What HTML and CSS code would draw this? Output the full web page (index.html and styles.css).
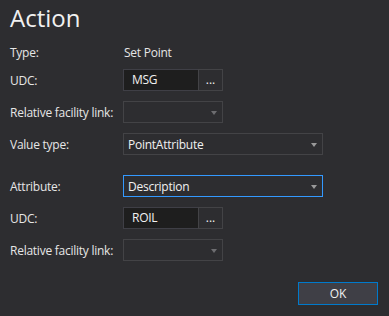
FILE: index.html
```html
<!DOCTYPE html>
<html lang="en">
<head>
  <meta charset="UTF-8">
  <title>Action</title>
  <link rel="stylesheet" href="styles.css">
</head>
<body>
  <div class="dialog">
    <h1 class="title">Action</h1>

    <div class="form">
      <div class="row row-type">
        <span class="label">Type:</span>
        <span class="value">Set Point</span>
      </div>

      <!-- first point -->
      <div class="row">
        <span class="label">UDC:</span>
        <div class="picker">
          <div class="textbox">MSG</div>
          <button class="browse">...</button>
        </div>
      </div>
      <div class="row">
        <span class="label">Relative facility link:</span>
        <div class="combo combo-short disabled"><span class="arrow"></span></div>
      </div>
      <div class="row">
        <span class="label">Value type:</span>
        <div class="combo combo-wide"><span>PointAttribute</span><span class="arrow"></span></div>
      </div>

      <!-- attribute -->
      <div class="row row-gap">
        <span class="label">Attribute:</span>
        <div class="combo combo-wide focused"><span>Description</span><span class="arrow"></span></div>
      </div>
      <div class="row">
        <span class="label">UDC:</span>
        <div class="picker">
          <div class="textbox">ROIL</div>
          <button class="browse">...</button>
        </div>
      </div>
      <div class="row">
        <span class="label">Relative facility link:</span>
        <div class="combo combo-short disabled"><span class="arrow"></span></div>
      </div>
    </div>

    <div class="footer">
      <button class="ok">OK</button>
    </div>
  </div>
</body>
</html>
```

FILE: styles.css
```css
html, body {
  margin: 0;
  height: 100%;
}
body {
  background: #2d2d30;
  color: #e6e6e6;
  font-family: 'Open Sans', 'Noto Sans', sans-serif;
  font-size: 12px;
  letter-spacing: -0.25px;
}
.dialog {
  padding: 0 11px 0 10px;
}
.title {
  margin: 0;
  padding-top: 3px;
  font-size: 24px;
  font-weight: normal;
  line-height: 30px;
  letter-spacing: 0;
  color: #f1f1f1;
}
.form {
  display: flex;
  flex-direction: column;
  gap: 10px;
  margin-top: 8px;
}
.row {
  display: flex;
  align-items: center;
  height: 22px;
}
.row-type {
  margin-bottom: -4px;
}
.row-gap {
  margin-top: 10px;
}
.label {
  width: 113px;
  flex-shrink: 0;
  white-space: nowrap;
}
.value {
  padding-left: 1px;
}
.picker {
  display: flex;
  height: 22px;
}
.textbox {
  box-sizing: border-box;
  width: 75px;
  height: 22px;
  padding: 0 8px;
  line-height: 20px;
  background: #1e1e1e;
  border: 1px solid #3f3f46;
  border-right: none;
  color: #f1f1f1;
}
.browse {
  box-sizing: border-box;
  width: 25px;
  height: 22px;
  padding: 0 0 2px;
  background: #2d2d30;
  border: 1px solid #434346;
  color: #f1f1f1;
  font-family: inherit;
  font-size: 12px;
  letter-spacing: 0;
}
.combo {
  box-sizing: border-box;
  display: flex;
  align-items: center;
  justify-content: space-between;
  height: 22px;
  padding: 0 5px 0 4px;
  background: #2d2d30;
  border: 1px solid #434346;
  color: #f1f1f1;
}
.combo-short {
  width: 100px;
}
.combo-wide {
  width: 200px;
}
.combo.disabled {
  justify-content: flex-end;
}
.combo.focused {
  border-color: #3399ff;
}
.arrow {
  width: 0;
  height: 0;
  margin-top: 1px;
  border-left: 3.5px solid transparent;
  border-right: 3.5px solid transparent;
  border-top: 4px solid #999999;
}
.disabled .arrow {
  border-top-color: #6d6d70;
}
.footer {
  display: flex;
  justify-content: flex-end;
  margin-top: 21px;
}
.ok {
  box-sizing: border-box;
  width: 80px;
  height: 23px;
  background: #3f3f46;
  border: 1px solid #007acc;
  color: #f1f1f1;
  font-family: inherit;
  font-size: 12px;
}
```
